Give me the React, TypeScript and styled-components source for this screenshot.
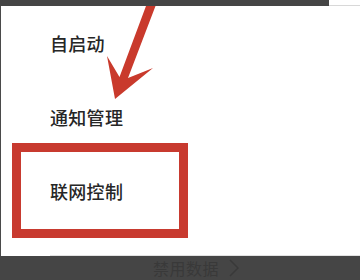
import React from 'react';
import styled, { createGlobalStyle } from 'styled-components';

const GlobalStyle = createGlobalStyle`
  html, body {
    margin: 0;
    padding: 0;
    background: #ffffff;
  }
  body {
    font-family: "Noto Sans CJK SC", "Noto Sans", sans-serif;
  }
`;

const Screen = styled.div`
  width: 360px;
  height: 280px;
  display: flex;
  flex-direction: column;
  overflow: hidden;
  background: #ffffff;
`;

const TopStrip = styled.div`
  display: flex;
  height: 6px;
`;

const TopBar = styled.div`
  flex: 0 0 329px;
  background: #454545;
`;

const TopRest = styled.div`
  flex: 1;
  border-bottom: 1px solid #d8d8d8;
`;

const Content = styled.div`
  position: relative;
  flex: 1;
  display: flex;
  flex-direction: column;
  border-left: 1px solid #4a4a4a;
`;

const Row = styled.div`
  height: 74px;
  display: flex;
  align-items: center;
  padding-left: 49px;
  font-size: 18px;
  font-weight: 500;
  letter-spacing: 0.3px;
  color: #262626;
`;

const TailRow = styled.div`
  height: 27px;
  margin-left: 49px;
  border-bottom: 1px solid #e2e2e2;
`;

const Highlight = styled.div`
  position: absolute;
  left: 11px;
  top: 137px;
  width: 176px;
  height: 95px;
  box-sizing: border-box;
  border: 9px solid #c83a2f;
  pointer-events: none;
`;

const ArrowLayer = styled.svg`
  position: absolute;
  left: -1px;
  top: 0;
  width: 360px;
  height: 250px;
  pointer-events: none;
`;

const BottomBar = styled.div`
  height: 24px;
  background: #454545;
  display: flex;
  align-items: center;
  padding-left: 153px;
  gap: 10px;
  font-size: 16px;
  color: #393939;
  letter-spacing: 0.5px;
`;

const Chevron = styled.svg`
  width: 10px;
  height: 18px;
`;

const items = ['自启动', '通知管理', '联网控制'];

const App: React.FC = () => {
  return (
    <Screen>
      <GlobalStyle />
      <TopStrip>
        <TopBar />
        <TopRest />
      </TopStrip>
      <Content>
        {items.map(label => (
          <Row key={label}>{label}</Row>
        ))}
        <TailRow />
        <Highlight />
        <ArrowLayer viewBox="0 0 360 250">
          <polygon
            points="146,0 155.5,0 128,72 153,62 115,93 107,50 119.5,71"
            fill="#c93a2c"
          />
        </ArrowLayer>
      </Content>
      <BottomBar>
        <span>禁用数据</span>
        <Chevron viewBox="0 0 10 18">
          <path d="M1 1 L9 9 L1 17" fill="none" stroke="#393939" strokeWidth="1.5" />
        </Chevron>
      </BottomBar>
    </Screen>
  );
};

export default App;
